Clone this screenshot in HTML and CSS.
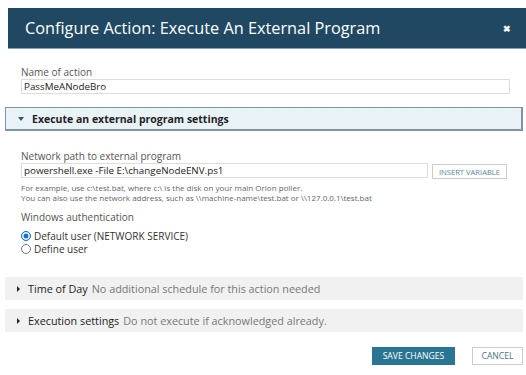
FILE: index.html
```html
<!DOCTYPE html>
<html lang="en">
<head>
  <meta charset="UTF-8" />
  <meta name="viewport" content="width=device-width, initial-scale=1.0" />
  <title>Configure Action</title>
  <link rel="stylesheet" href="styles.css">
</head>
<body>

  <div class="dialog-header">
    <span class="dialog-title">Configure Action: Execute An External Program</span>
    <span class="close">&#10006;</span>
  </div>

  <!-- Name -->
  <div class="field name-field">
    <label>Name of action</label>
    <div class="text-input wide">PassMeANodeBro</div>
  </div>

  <!-- Expanded section -->
  <div class="section-head open">
    <span class="caret-down"></span>
    <span>Execute an external program settings</span>
  </div>

  <div class="field path-field">
    <label>Network path to external program</label>
    <div class="input-row">
      <div class="text-input path">powershell.exe -File E:\changeNodeENV.ps1</div>
      <button class="btn-variable">INSERT VARIABLE</button>
    </div>
    <div class="hint">
      For example, use c:\test.bat, where c:\ is the disk on your main Orion poller.<br>
      You can also use the network address, such as \\machine-name\test.bat or \\127.0.0.1\test.bat
    </div>
  </div>

  <div class="field auth-field">
    <label>Windows authentication</label>
    <div class="radio-row"><span class="radio checked"></span>Default user (NETWORK SERVICE)</div>
    <div class="radio-row"><span class="radio"></span>Define user</div>
  </div>

  <!-- Collapsed sections -->
  <div class="section-bar first">
    <span class="caret-right"></span>
    <span class="bar-title">Time of Day</span>
    <span class="bar-desc">No additional schedule for this action needed</span>
  </div>
  <div class="section-bar">
    <span class="caret-right"></span>
    <span class="bar-title">Execution settings</span>
    <span class="bar-desc">Do not execute if acknowledged already.</span>
  </div>

  <div class="actions">
    <button class="btn-save">SAVE CHANGES</button>
    <button class="btn-cancel">CANCEL</button>
  </div>

</body>
</html>
```

FILE: styles.css
```css
* {
  box-sizing: border-box;
  margin: 0;
  padding: 0;
  font-family: 'Open Sans', sans-serif;
}

body {
  background: #fff;
  color: #333;
  width: 526px;
  height: 375px;
  overflow: hidden;
  padding-top: 8px;
}

.dialog-header {
  margin-left: 8px;
  height: 41px;
  background: #214862;
  color: #fff;
  display: flex;
  align-items: center;
  justify-content: space-between;
  padding: 0 15px 0 17px;
  border-bottom: 1px solid #8aa0b0;
}

.dialog-title {
  font-size: 16.3px;
}

.close {
  font-size: 9px;
  font-weight: bold;
}

.field {
  margin-left: 21px;
}

label {
  display: block;
  font-size: 10px;
  line-height: 12px;
  color: #555;
  margin-bottom: 1px;
}

.name-field {
  margin-top: 17px;
}

.text-input {
  height: 15px;
  border: 1px solid #ddd;
  font-size: 9.8px;
  line-height: 13px;
  padding-left: 2px;
  color: #222;
}

.text-input.wide {
  width: 489px;
}

.section-head {
  margin: 13px 3px 0 5px;
  height: 24px;
  background: #e8f2f7;
  border: 1px solid #7e93a5;
  border-width: 1px 2px 2px 1px;
  display: flex;
  align-items: center;
  font-size: 10.5px;
  font-weight: bold;
  color: #222;
}

.caret-down {
  width: 0;
  height: 0;
  border-left: 3px solid transparent;
  border-right: 3px solid transparent;
  border-top: 4px solid #2b5a78;
  margin: 0 8px 0 12px;
}

.path-field {
  margin-top: 19px;
}

.input-row {
  display: flex;
  align-items: flex-start;
  gap: 4px;
}

.text-input.path {
  width: 407px;
  font-size: 9.8px;
}

.btn-variable {
  width: 75px;
  height: 15px;
  margin-top: 1px;
  background: #fff;
  border: 1px solid #ccc;
  color: #5a8599;
  font-size: 7.6px;
}

.hint {
  margin-top: 4px;
  font-size: 8px;
  line-height: 10px;
  color: #666;
}

.auth-field {
  margin-top: 8px;
}

.auth-field label {
  margin-bottom: 6px;
}

.radio-row {
  display: flex;
  align-items: center;
  height: 13px;
  font-size: 10px;
  color: #333;
}

.radio {
  width: 10px;
  height: 10px;
  border-radius: 50%;
  border: 1px solid #777;
  margin: 0 3px 0 0;
}

.radio.checked {
  border: 1.5px solid #1a6fd8;
  background: #1a6fd8;
  box-shadow: inset 0 0 0 1.5px #fff;
}

.section-bar {
  margin: 9px 3px 0 5px;
  height: 23px;
  background: #f1f1f1;
  display: flex;
  align-items: center;
  font-size: 10.8px;
}

.section-bar.first {
  margin-top: 22px;
}

.caret-right {
  width: 0;
  height: 0;
  border-top: 3px solid transparent;
  border-bottom: 3px solid transparent;
  border-left: 3px solid #222;
  margin: 0 8px 0 12px;
}

.bar-title {
  color: #222;
  margin-right: 4px;
}

.bar-desc {
  color: #777;
}

.actions {
  display: flex;
  justify-content: flex-end;
  gap: 17px;
  margin: 15px 3px 0 0;
}

.actions button {
  height: 18px;
  font-size: 8.6px;
  cursor: pointer;
}

.btn-save {
  width: 83px;
  background: #2a7592;
  border: none;
  color: #fff;
}

.btn-cancel {
  width: 51px;
  background: #fff;
  border: 1px solid #ccc;
  color: #4d7486;
}
```
